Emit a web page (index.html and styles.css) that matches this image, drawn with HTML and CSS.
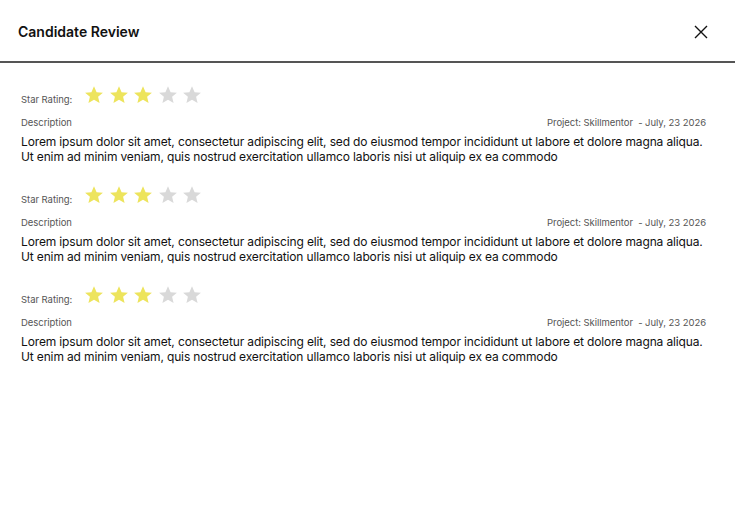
FILE: index.html
```html
<!DOCTYPE html>
<html>
<head>
<meta charset="utf-8">
<link rel="stylesheet" href="styles.css">
</head>
<body>
<div class="modal">
  <header class="header">
    <h1 class="title">Candidate Review</h1>
    <button class="close" aria-label="Close">
      <svg width="14" height="14" viewBox="0 0 14 14"><path d="M1 1L13 13M13 1L1 13" stroke="#111" stroke-width="1.4" fill="none"/></svg>
    </button>
  </header>
  <main class="list">
    <section class="review">
      <div class="rating-row">
        <span class="label">Star Rating:</span>
        <div class="stars">
          <svg class="star on" viewBox="0 0 24 24"><path d="M12 1.5l3.1 7.1 7.6.6-5.8 5 1.8 7.5L12 17.7l-6.7 4 1.8-7.5-5.8-5 7.6-.6z"/></svg>
          <svg class="star on" viewBox="0 0 24 24"><path d="M12 1.5l3.1 7.1 7.6.6-5.8 5 1.8 7.5L12 17.7l-6.7 4 1.8-7.5-5.8-5 7.6-.6z"/></svg>
          <svg class="star on" viewBox="0 0 24 24"><path d="M12 1.5l3.1 7.1 7.6.6-5.8 5 1.8 7.5L12 17.7l-6.7 4 1.8-7.5-5.8-5 7.6-.6z"/></svg>
          <svg class="star" viewBox="0 0 24 24"><path d="M12 1.5l3.1 7.1 7.6.6-5.8 5 1.8 7.5L12 17.7l-6.7 4 1.8-7.5-5.8-5 7.6-.6z"/></svg>
          <svg class="star" viewBox="0 0 24 24"><path d="M12 1.5l3.1 7.1 7.6.6-5.8 5 1.8 7.5L12 17.7l-6.7 4 1.8-7.5-5.8-5 7.6-.6z"/></svg>
        </div>
      </div>
      <div class="meta">
        <span class="label">Description</span>
        <span class="label">Project: Skillmentor&nbsp; - July, 23 2026</span>
      </div>
      <p class="text">Lorem ipsum dolor sit amet, consectetur adipiscing elit, sed do eiusmod tempor incididunt ut labore et dolore magna aliqua. Ut enim ad minim veniam, quis nostrud exercitation ullamco laboris nisi ut aliquip ex ea commodo</p>
    </section>
    <section class="review">
      <div class="rating-row">
        <span class="label">Star Rating:</span>
        <div class="stars">
          <svg class="star on" viewBox="0 0 24 24"><path d="M12 1.5l3.1 7.1 7.6.6-5.8 5 1.8 7.5L12 17.7l-6.7 4 1.8-7.5-5.8-5 7.6-.6z"/></svg>
          <svg class="star on" viewBox="0 0 24 24"><path d="M12 1.5l3.1 7.1 7.6.6-5.8 5 1.8 7.5L12 17.7l-6.7 4 1.8-7.5-5.8-5 7.6-.6z"/></svg>
          <svg class="star on" viewBox="0 0 24 24"><path d="M12 1.5l3.1 7.1 7.6.6-5.8 5 1.8 7.5L12 17.7l-6.7 4 1.8-7.5-5.8-5 7.6-.6z"/></svg>
          <svg class="star" viewBox="0 0 24 24"><path d="M12 1.5l3.1 7.1 7.6.6-5.8 5 1.8 7.5L12 17.7l-6.7 4 1.8-7.5-5.8-5 7.6-.6z"/></svg>
          <svg class="star" viewBox="0 0 24 24"><path d="M12 1.5l3.1 7.1 7.6.6-5.8 5 1.8 7.5L12 17.7l-6.7 4 1.8-7.5-5.8-5 7.6-.6z"/></svg>
        </div>
      </div>
      <div class="meta">
        <span class="label">Description</span>
        <span class="label">Project: Skillmentor&nbsp; - July, 23 2026</span>
      </div>
      <p class="text">Lorem ipsum dolor sit amet, consectetur adipiscing elit, sed do eiusmod tempor incididunt ut labore et dolore magna aliqua. Ut enim ad minim veniam, quis nostrud exercitation ullamco laboris nisi ut aliquip ex ea commodo</p>
    </section>
    <section class="review">
      <div class="rating-row">
        <span class="label">Star Rating:</span>
        <div class="stars">
          <svg class="star on" viewBox="0 0 24 24"><path d="M12 1.5l3.1 7.1 7.6.6-5.8 5 1.8 7.5L12 17.7l-6.7 4 1.8-7.5-5.8-5 7.6-.6z"/></svg>
          <svg class="star on" viewBox="0 0 24 24"><path d="M12 1.5l3.1 7.1 7.6.6-5.8 5 1.8 7.5L12 17.7l-6.7 4 1.8-7.5-5.8-5 7.6-.6z"/></svg>
          <svg class="star on" viewBox="0 0 24 24"><path d="M12 1.5l3.1 7.1 7.6.6-5.8 5 1.8 7.5L12 17.7l-6.7 4 1.8-7.5-5.8-5 7.6-.6z"/></svg>
          <svg class="star" viewBox="0 0 24 24"><path d="M12 1.5l3.1 7.1 7.6.6-5.8 5 1.8 7.5L12 17.7l-6.7 4 1.8-7.5-5.8-5 7.6-.6z"/></svg>
          <svg class="star" viewBox="0 0 24 24"><path d="M12 1.5l3.1 7.1 7.6.6-5.8 5 1.8 7.5L12 17.7l-6.7 4 1.8-7.5-5.8-5 7.6-.6z"/></svg>
        </div>
      </div>
      <div class="meta">
        <span class="label">Description</span>
        <span class="label">Project: Skillmentor&nbsp; - July, 23 2026</span>
      </div>
      <p class="text">Lorem ipsum dolor sit amet, consectetur adipiscing elit, sed do eiusmod tempor incididunt ut labore et dolore magna aliqua. Ut enim ad minim veniam, quis nostrud exercitation ullamco laboris nisi ut aliquip ex ea commodo</p>
    </section>
  </main>
</div>
</body>
</html>
```
FILE: styles.css
```css
* { box-sizing: border-box; }
html, body { margin: 0; padding: 0; background: #fff; }
body { font-family: Inter, "Noto Sans", sans-serif; color: #111; }
.modal { width: 735px; height: 522px; }
.header {
  height: 63px;
  display: flex;
  align-items: center;
  justify-content: space-between;
  padding: 2px 27px 0 18px;
  border-bottom: 2px solid #555;
}
.title { margin: 0; font-size: 14px; font-weight: 600; color: #111; }
.close { border: 0; background: none; padding: 0; width: 14px; height: 14px; display: flex; cursor: pointer; }
.list { padding: 21px 29px 0 21px; display: flex; flex-direction: column; gap: 20px; }
.review { display: flex; flex-direction: column; }
.rating-row { display: flex; align-items: center; gap: 12px; height: 22px; }
.rating-row .label { padding-top: 8px; font-size: 9.5px; }
.label { font-size: 9.5px; color: #555; letter-spacing: -0.05px; }
.stars { display: flex; gap: 4.5px; }
.star { width: 20px; height: 20px; fill: #d9d9d9; }
.star.on { fill: #ede45c; }
.meta { display: flex; justify-content: space-between; align-items: center; margin-top: 8px; height: 16px; }
.text { margin: 4px 0 0; font-size: 12px; line-height: 15px; letter-spacing: -0.14px; color: #111; }
```
